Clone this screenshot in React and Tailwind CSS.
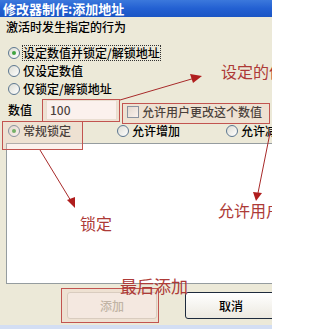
import React from 'react';

const font = "font-['SimSun','Noto_Sans_CJK_SC',sans-serif]";
const note = 'absolute text-[16px] leading-[16px] text-[#ad3a37] whitespace-nowrap';
const mark = 'absolute border border-[#c25450] bg-[#f3cfc4]/30';

const Radio = ({ checked }) => (
  <span className="w-[12px] h-[12px] rounded-full border border-[#5d7790] bg-gradient-to-br from-[#dcdcd4] to-white flex items-center justify-center shrink-0">
    {checked && <span className="w-[4px] h-[4px] rounded-full bg-[#3fa33f]" />}
  </span>
);

const RadioRow = ({ checked, children, focus }) => (
  <div className="h-[18px] flex items-center gap-[3px] pl-[2px]">
    <Radio checked={checked} />
    <span className={focus ? 'outline outline-1 outline-dotted outline-[#333] leading-[14px]' : 'leading-[14px]'}>{children}</span>
  </div>
);

export default function App() {
  return (
    <div className={`relative w-[272px] h-[329px] overflow-hidden bg-[#ECE9D8] text-[12px] text-black font-medium ${font}`}>
      {/* Title bar */}
      <div className="h-[17px] bg-gradient-to-b from-[#3b78dc] via-[#2360d2] to-[#1a55c4] text-white font-bold text-[13px] leading-[17px] pl-[3px] whitespace-nowrap">
        修改器制作:添加地址
      </div>

      <div className="pl-[6px]">
        <div className="mt-[3px] h-[14px] leading-[14px]">激活时发生指定的行为</div>

        <div className="mt-[10px]">
          <RadioRow checked focus>设定数值并锁定/解锁地址</RadioRow>
          <RadioRow>仅设定数值</RadioRow>
          <RadioRow>仅锁定/解锁地址</RadioRow>
        </div>

        {/* Value row */}
        <div className="mt-[1px] h-[22px] flex items-center pl-[2px]">
          <span className="w-[38px]">数值</span>
          <div className="w-[71px] h-[20px] bg-white border border-[#e6e2d6] flex items-center pl-[3px] text-[12px]">100</div>
          <div className="ml-[10px] mt-[4px] flex items-center gap-[3px]">
            <span className="w-[12px] h-[12px] border border-[#5d7790] bg-gradient-to-br from-[#dcdcd4] to-white" />
            <span>允许用户更改这个数值</span>
          </div>
        </div>

        {/* Lock mode */}
        <div className="h-[16px] mt-[1px] grid grid-cols-[109px_109px_109px] whitespace-nowrap">
          <div className="flex items-center gap-[3px] pl-[2px]"><Radio checked /><span>常规锁定</span></div>
          <div className="flex items-center gap-[3px] pl-[2px]"><Radio /><span>允许增加</span></div>
          <div className="flex items-center gap-[3px] pl-[2px]"><Radio /><span>允许减少</span></div>
        </div>

        {/* List */}
        <div className="mt-[5px] h-[141px] bg-white border border-[#959c9f] mr-[-4px]" />

        {/* Buttons */}
        <div className="mt-[8px] h-[27px] flex gap-[28px] pl-[61px]">
          <button className="w-[90px] h-[27px] shrink-0 rounded-[3px] border border-[#cfcbbd] bg-[#f5f3ec] text-[#aca899] text-[12px]">添加</button>
          <button className="w-[92px] h-[27px] shrink-0 rounded-[3px] border border-[#1d2a3c] bg-gradient-to-b from-white to-[#ece9e0] text-black text-[12px]">取消</button>
        </div>
      </div>
      <div className="absolute left-0 right-0 bottom-0 h-[4px] bg-[#d3def3]" />

      {/* Annotations */}
      <div className={mark + ' left-[42px] top-[99px] w-[78px] h-[23px]'} />
      <div className={mark + ' left-[122px] top-[103px] w-[148px] h-[21px]'} />
      <div className={mark + ' left-[2px] top-[121px] w-[81px] h-[29px]'} />
      <div className={mark + ' left-[61px] top-[288px] w-[98px] h-[35px]'} />

      <svg className="absolute inset-0" width="272" height="329" viewBox="0 0 272 329">
        <g stroke="#a82a2a" strokeWidth="1" fill="#b01e1e">
          <line x1="120" y1="100" x2="195" y2="78" />
          <polygon points="202,76 190,74 193,83" stroke="none" />
          <line x1="40" y1="150" x2="71" y2="201" />
          <polygon points="75,208 67,200 75,197" stroke="none" />
          <line x1="270" y1="133" x2="258" y2="193" />
          <polygon points="256,201 253,192 262,193" stroke="none" />
        </g>
      </svg>
      <div className={note + ' font-normal left-[221px] top-[63px]'}>设定的值</div>
      <div className={note + ' font-normal left-[80px] top-[215px]'}>锁定</div>
      <div className={note + ' font-normal left-[218px] top-[202px]'}>允许用户</div>
      <div className={note + ' font-normal left-[120px] top-[278px] text-[17px]'}>最后添加</div>
    </div>
  );
}
